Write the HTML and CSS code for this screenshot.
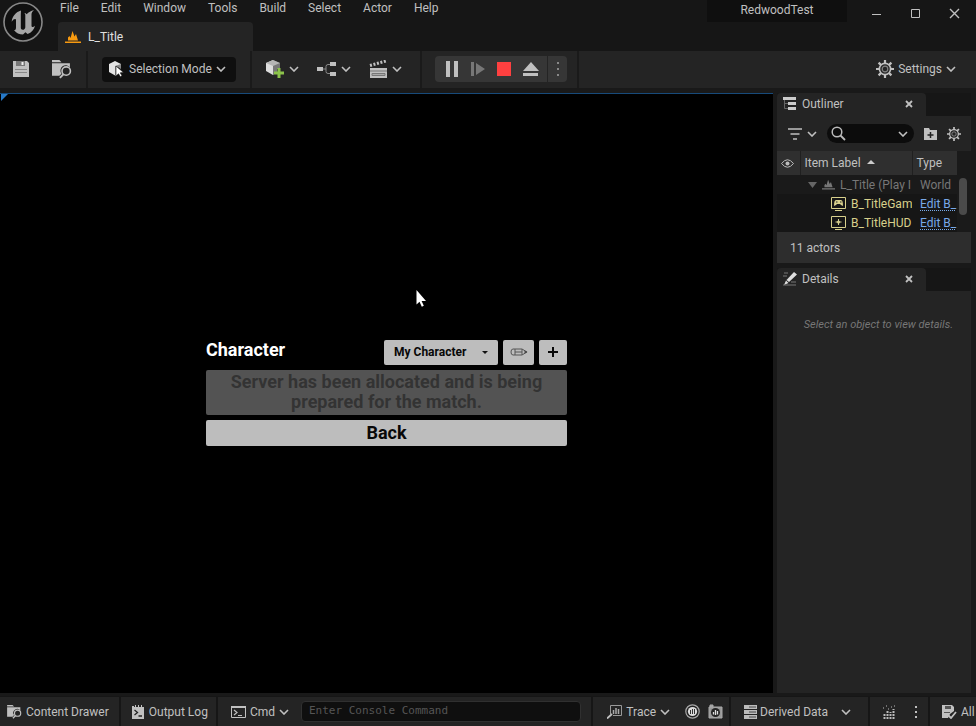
FILE: index.html
```html
<!DOCTYPE html>
<html lang="en">
<head>
<meta charset="utf-8">
<title>RedwoodTest</title>
<link rel="stylesheet" href="styles.css">
</head>
<body>
<svg class="defs" aria-hidden="true">
  <symbol id="chevron" viewBox="0 0 10 6"><path d="M1 1l4 4 4-4" fill="none" stroke="currentColor" stroke-width="1.6"/></symbol>
  <symbol id="gear" viewBox="0 0 18 18">
    <circle cx="9" cy="9" r="5.6" fill="none" stroke="currentColor" stroke-width="1.6"/>
    <circle cx="9" cy="9" r="2.8" fill="none" stroke="currentColor" stroke-width="1.2" opacity=".6"/>
    <path d="M9 0v3.5M9 14.500V18M0 9h3.500M14.500 9H18M2.600 2.600l2.500 2.500M12.900 12.900l2.500 2.500M2.600 15.400l2.500-2.500M12.900 5.100l2.500-2.500" stroke="currentColor" stroke-width="2.200"/>
  </symbol>
  <symbol id="browse" viewBox="0 0 19 18">
    <path d="M0 0h7l2 2H0zM0 3h17v4a5 5 0 0 0-8 6l-2 2H0z" fill="currentColor"/>
    <circle cx="13.500" cy="10.500" r="4" fill="#242424" stroke="currentColor" stroke-width="1.500"/>
    <path d="M10.800 13.500L7.500 17" stroke="currentColor" stroke-width="1.800"/>
  </symbol>
  <symbol id="cross" viewBox="0 0 8 8"><path d="M1 1l6 6M7 1L1 7" stroke="currentColor" stroke-width="1.800"/></symbol>
  <symbol id="peaks" viewBox="0 0 16 12"><path d="M3 9.500V6.500L4.500 5l1 2L7.500 0l2 5.500L11 3l2 6.500zM0 10.500h16V12H0z" fill="currentColor"/></symbol>
</svg>

<header class="titlebar">
  <svg class="logo" viewBox="0 0 42 42" aria-label="Unreal Engine" role="img">
    <circle cx="21" cy="21" r="19" fill="#101010" stroke="#888" stroke-width="1.600"/>
    <path d="M19 9.500c-5 1.400-9 6-9.300 11.200 1.200-2 2.500-2.700 3.300-2.700.7 0 1 .5 1 1.400v7c0 2.200-.8 2.600-2 2.600 2 3 5.500 4.600 9 4.600l2.400-2.400 2.200 1.800c4-1.500 6.500-4.300 7.400-8.300-1 1-2 1.500-2.700 1.400-.6-.1-.8-.6-.8-1.500V13.500c0-1.500.6-2.700 2.500-4.500-3 .8-5.500 2.200-7.300 4.200-.7-.7-1.500-1-2.400-1.100.8.700 1 1.200 1 2.100v12c0 1.500-1.200 2.600-2.500 2.600-1.200 0-2-.7-2-2V14c0-1 .1-2.500.2-4.500z" fill="#a5a5a5"/>
  </svg>
  <div class="title-main">
    <nav class="menu" aria-label="Main menu">
      <button>File</button><button>Edit</button><button>Window</button><button>Tools</button><button>Build</button><button>Select</button><button>Actor</button><button>Help</button>
    </nav>
    <div class="level-tab"><svg class="level-icon" width="16" height="12"><use href="#peaks"/></svg>L_Title</div>
  </div>
  <div class="project">RedwoodTest</div>
  <div class="window-buttons">
    <button aria-label="Minimize"><svg width="11" height="11"><path d="M1 6.500h9" stroke="currentColor"/></svg></button>
    <button aria-label="Maximize"><svg width="11" height="11"><path d="M1.500 1.500h8v8h-8z" fill="none" stroke="currentColor"/></svg></button>
    <button aria-label="Close"><svg width="11" height="11"><path d="M1 1l9 9M10 1l-9 9" stroke="currentColor" stroke-width="1.400"/></svg></button>
  </div>
</header>

<div class="toolbar">
  <div class="tools tools-file">
    <button aria-label="Save"><svg width="18" height="18" viewBox="0 0 18 18"><path d="M1 1h14l2 2v14H1z" fill="currentColor"/><path d="M4 1h9v5H4z" fill="#777"/><path d="M9.500 2h2v3h-2z" fill="#eee"/><path d="M3 9.500h12M3 12.500h12" stroke="#888"/></svg></button>
    <button aria-label="Browse"><svg width="20" height="19"><use href="#browse"/></svg></button>
  </div>
  <div class="tools tools-mode">
    <label class="mode">
      <svg width="15" height="16" viewBox="0 0 15 16"><path d="M0 3l6-3 6 3v3L7 5v10L0 11z" fill="#e4e4e4"/><path d="M6 5l6-2v5L7 5v10l-1-1z" fill="#888"/><path d="M7 5l7.500 6.500-3.300.3 1.800 3-1.700 1-1.800-3L7 15z" fill="#fff" stroke="#111" stroke-width=".6"/></svg>
      <select aria-label="Editor mode"><option>Selection Mode</option></select>
      <svg class="chev" width="10" height="6"><use href="#chevron"/></svg>
    </label>
  </div>
  <div class="tools tools-add">
    <button aria-label="Add content"><svg width="20" height="20" viewBox="0 0 20 20"><path d="M1 4l7-3v15l-7-4z" fill="#ddd"/><path d="M8 1l7 3v6H12v3H9v3H8z" fill="#777"/><path d="M1 4l7-3 7 3-7 3z" fill="#b5b5b5"/><path d="M14 9v10M9 14h10" stroke="#8bc24a" stroke-width="3"/></svg><svg width="10" height="6"><use href="#chevron"/></svg></button>
    <button aria-label="Blueprints"><svg width="20" height="16" viewBox="0 0 20 16"><path d="M0 6h6v4H0zM13 1h6v4h-6zM13 11h6v4h-6z" fill="currentColor"/><path d="M6 8h3M13 3.500h-2q-2 0-2 2v5q0 2 2 2h2" fill="none" stroke="#888"/></svg><svg width="10" height="6"><use href="#chevron"/></svg></button>
    <button aria-label="Cinematics"><svg width="19" height="19" viewBox="0 0 19 19"><path d="M1 8h17v10H1z" fill="currentColor"/><path d="M1 11h17M3 13.500h13v2H3z" stroke="#777" fill="#aaa"/><path d="M1 5.500L17 1" stroke="currentColor" stroke-width="3" stroke-dasharray="2 1.600"/></svg><svg width="10" height="6"><use href="#chevron"/></svg></button>
  </div>
  <div class="tools tools-play">
    <div class="play-group">
      <button aria-label="Pause"><svg width="12" height="16"><path d="M0 0h4v16H0zM8 0h4v16H8z" fill="currentColor"/></svg></button>
      <button aria-label="Advance frame"><svg width="15" height="16"><path d="M1 1h3v14H1zM6 2l9 6-9 6z" fill="#777"/></svg></button>
      <button aria-label="Stop"><svg width="14" height="16"><path d="M0 1h14v14H0z" fill="#ff4040"/></svg></button>
      <button aria-label="Eject"><svg width="16" height="16"><path d="M8 1l8 9H0zM0 12h15v3H0z" fill="currentColor"/></svg></button>
      <button class="more" aria-label="Play options"><svg width="4" height="16"><path d="M1 1h2v2H1zM1 7h2v2H1zM1 13h2v2H1z" fill="#888"/></svg></button>
    </div>
  </div>
  <button class="settings"><svg width="18" height="18"><use href="#gear"/></svg>Settings<svg width="10" height="6"><use href="#chevron"/></svg></button>
</div>

<main class="workspace">
  <section class="viewport" aria-label="Game viewport">
    <svg class="corner" width="8" height="7"><path d="M1 0h7L1 7z" fill="#2779c7"/></svg>
    <div class="lobby">
      <div class="lobby-top">
        <h1>Character</h1>
        <label class="character">
          <select aria-label="Character"><option>My Character</option></select>
          <svg class="chev" width="6" height="3"><path d="M0 0h6L3 3z" fill="#111"/></svg>
        </label>
        <button class="light edit" aria-label="Edit character"><svg width="18" height="8" viewBox="0 0 18 8"><path d="M3 1h9l5 3-5 3H3Q1 7 1 4t2-3zM5 1v6M5 4h7M12 1v6" fill="none" stroke="#555"/><path d="M14.500 2.500L17.500 4l-3 1.500z" fill="#444"/></svg></button>
        <button class="light add" aria-label="New character"><svg width="10" height="10"><path d="M5 0v10M0 5h10" stroke="#080808" stroke-width="2"/></svg></button>
      </div>
      <button class="light status-message" disabled>Server has been allocated and is being prepared for the match.</button>
      <button class="light back">Back</button>
    </div>
    <svg class="cursor" width="12" height="18"><path d="M.5 0v14.500l3-2.800 2.300 5 2-1-2.200-4.800H10z" fill="#fff"/></svg>
  </section>

  <aside class="side">
    <section class="panel outliner">
      <div class="tabs"><h2 class="tab"><svg width="14" height="14"><path d="M0 0h13v3H0zM5 5h8v3H5zM5 10h8v3H5z" fill="#ccc"/><path d="M1.500 3v8.500H5M1.500 6.500H5" fill="none" stroke="#666"/></svg>Outliner<button aria-label="Close Outliner"><svg width="8" height="8"><use href="#cross"/></svg></button></h2></div>
      <div class="filters">
        <button aria-label="Filter"><svg width="14" height="12"><path d="M0 1h14M2.500 6h9M5 11h4" stroke="currentColor" stroke-width="1.600"/></svg><svg width="10" height="6"><use href="#chevron"/></svg></button>
        <label class="search"><svg width="15" height="15"><circle cx="6" cy="6" r="4.800" fill="none" stroke="#bbb" stroke-width="1.500"/><path d="M9.500 9.500L14 14" stroke="#bbb" stroke-width="1.800"/></svg><input type="search" aria-label="Search outliner"><svg width="10" height="6"><use href="#chevron"/></svg></label>
        <button class="folder" aria-label="New folder"><svg width="13" height="13"><path d="M0 1h5l1 2h7v10H0z" fill="currentColor"/><path d="M6.500 5v6M3.500 8h6" stroke="#222" stroke-width="1.500"/></svg></button>
        <button aria-label="Outliner settings"><svg width="14" height="14"><use href="#gear"/></svg></button>
      </div>
      <div class="list">
        <table>
          <thead><tr>
            <th class="eye"><svg width="13" height="9" viewBox="0 0 13 9"><path d="M.5 4.500q6-7.500 12 0-6 7.500-12 0z" fill="none" stroke="#bbb"/><circle cx="6.500" cy="4.500" r="2" fill="#bbb"/></svg></th>
            <th class="label">Item Label<svg class="sort" width="8" height="4"><path d="M0 4l4-4 4 4z" fill="#ccc"/></svg></th>
            <th class="type">Type</th>
          </tr></thead>
          <tbody>
            <tr class="world"><td></td><td><div class="cell"><svg width="9" height="6"><path d="M0 0h9L4.500 6z" fill="#666"/></svg><svg width="13" height="11"><use href="#peaks"/></svg><span class="item">L_Title (Play I</span></div></td><td>World</td></tr>
            <tr class="actor"><td></td><td><div class="cell child"><svg width="15" height="14"><path d="M.5.500h14v11H.5zM4 13.500h7" fill="none" stroke="currentColor"/><path d="M3 9q0-6 2-6h5q2 0 2 6l-2-1-1-1H6L5 8z" fill="currentColor"/><path d="M5 5h1.500M9 5h1.500" stroke="#222"/></svg><span class="item">B_TitleGam</span></div></td><td><a href="#">Edit B_</a></td></tr>
            <tr class="actor"><td></td><td><div class="cell child"><svg width="15" height="14"><path d="M.5.500h14v11H.5zM4 13.500h7M7.500 3v6M4.500 6h6" fill="none" stroke="currentColor"/><circle cx="7.500" cy="6" r="1.500" fill="currentColor"/></svg><span class="item">B_TitleHUD</span></div></td><td><a href="#">Edit B_</a></td></tr>
          </tbody>
        </table>
        <div class="scroll"></div>
      </div>
      <div class="count">11 actors</div>
    </section>
    <section class="panel details">
      <div class="tabs"><h2 class="tab"><svg width="14" height="14"><path d="M11 0l3 2.500L6 10 3.500 8zM3 8.500L5.500 11 1 13z" fill="#ddd"/><path d="M0 4h4M1 1h4M0 13h13M8 10h5" stroke="#777"/></svg>Details<button aria-label="Close Details"><svg width="8" height="8"><use href="#cross"/></svg></button></h2></div>
      <p class="empty">Select an object to view details.</p>
    </section>
  </aside>
</main>

<footer class="statusbar">
  <div class="seg drawer"><button><svg width="15" height="14"><use href="#browse"/></svg>Content Drawer</button></div>
  <div class="seg log"><button><svg width="13" height="14"><path d="M0 1h2v1h1V0h1v2h2V0h1v2h2V0h1v2h2v12H0z" fill="currentColor"/><path d="M2.500 5l3 2.500-3 2.500M6.500 11H10" fill="none" stroke="#222" stroke-width="1.300"/></svg>Output Log</button></div>
  <div class="seg console">
    <button><svg width="15" height="12"><path d="M.5.500h14v11H.5z" fill="none" stroke="currentColor"/><path d="M0 0h15v2H0z" fill="currentColor"/><path d="M3 4l3 2.500L3 9M7 9.500h4" fill="none" stroke="currentColor" stroke-width="1.200"/></svg>Cmd<svg width="10" height="6"><use href="#chevron"/></svg></button>
    <input type="text" aria-label="Console command" placeholder="Enter Console Command">
  </div>
  <div class="seg trace">
    <button><svg width="15" height="14"><path d="M3.500 9V.5h11v10H6" fill="none" stroke="#999"/><path d="M6.500 9V5M9 9V3M11.500 9V4" stroke="#aaa" stroke-width="1.500"/><path d="M0 13.500L5 9" stroke="currentColor" stroke-width="1.800"/></svg>Trace<svg width="10" height="6"><use href="#chevron"/></svg></button>
    <button aria-label="Start trace"><svg width="15" height="15"><circle cx="7.500" cy="7.500" r="6.700" fill="none" stroke="#aaa" stroke-width="1.200"/><circle cx="7.500" cy="7.500" r="4.600" fill="#ddd"/><path d="M5.500 6v4M7.500 5v5M9.500 5v5" stroke="#333"/></svg></button>
    <button aria-label="Trace snapshot"><svg width="15" height="15"><path d="M1 3h13v11H1zM2 1h3v2H2z" fill="#999" stroke="#aaa"/><circle cx="7.500" cy="8.500" r="4.500" fill="#242424"/><path d="M5.500 10.500V8M7.500 11V6M9.500 10.500V7" stroke="#ddd" stroke-width="1.300"/></svg></button>
  </div>
  <div class="seg derived"><button><svg width="13" height="14"><path d="M0 0h13v4H0zM0 5h13v4H0zM0 10h13v4H0z" fill="#bbb"/><path d="M5 2h7M5 7h7M5 12h7" stroke="#444"/></svg>Derived Data<svg class="space" width="10" height="6"><use href="#chevron"/></svg></button></div>
  <div class="seg stats">
    <button aria-label="Performance"><svg width="13" height="14"><path d="M1.500 14V8M4.500 14V6M7.500 14V7M10.500 14V4" stroke="#bbb" stroke-width="2" stroke-dasharray="2 1"/><path d="M0 3h1M3 1h1M5 4h1M8 2h1M11 1h1" stroke="#bbb"/></svg></button>
    <button aria-label="More"><svg width="4" height="14"><path d="M1 1h2v2H1zM1 6h2v2H1zM1 11h2v2H1z" fill="currentColor"/></svg></button>
  </div>
  <div class="seg saved"><button><svg width="15" height="14"><path d="M0 0h10l2 2v4L8 9l-2 4H0z" fill="currentColor"/><path d="M3 1h6v3H3zM2 7h6v1H2z" fill="#555"/><path d="M6.500 10.500L9 13l5-6" fill="none" stroke="currentColor" stroke-width="1.800"/></svg>All</button></div>
</footer>
</body>
</html>
```
FILE: styles.css
```css
* { box-sizing: border-box; }

body {
  margin: 0;
  height: 100vh;
  display: flex;
  flex-direction: column;
  overflow: hidden;
  background: #161616;
  color: #c0c0c0;
  font: 12px/16px Roboto, "Liberation Sans", sans-serif;
  white-space: nowrap;
}

svg { flex: none; display: block; }
.defs { position: absolute; width: 0; height: 0; }

button, select, input { font: inherit; color: inherit; }
button {
  display: flex;
  align-items: center;
  justify-content: center;
  padding: 0;
  border: 0;
  background: none;
}
select {
  appearance: none;
  padding: 0;
  border: 0;
  background: none;
}

/* Title bar */
.titlebar { display: flex; height: 51px; flex: none; }
.logo { width: 42px; height: 42px; margin: 1px 14px 0 2px; }
.title-main { flex: 1; display: flex; flex-direction: column; justify-content: space-between; }
.menu { display: flex; gap: 22px; padding-left: 2px; }
.level-tab {
  display: flex;
  align-items: center;
  gap: 7px;
  width: 195px;
  height: 29px;
  padding-left: 7px;
  border-radius: 4px 4px 0 0;
  background: #242424;
  color: #e0e0e0;
}
.level-icon { color: #f79a10; }
.project {
  width: 140px;
  height: 22px;
  padding-top: 2px;
  background: #0f0f0f;
  text-align: center;
}
.window-buttons { display: flex; gap: 28px; height: 26px; padding: 0 16px 0 24px; }

/* Toolbar */
.toolbar {
  display: flex;
  flex: none;
  height: 37px;
  background: #242424;
}
.tools {
  display: flex;
  align-items: center;
  padding-bottom: 1px;
  border-right: 2px solid #1a1a1a;
}
.tools-file { gap: 22px; padding-left: 12px; padding-right: 14px; }
.tools-mode { padding-left: 14px; padding-right: 14px; }
.mode {
  display: grid;
  grid-template-columns: 15px 97px;
  gap: 5px;
  align-items: center;
  height: 25px;
  padding: 0 10px 0 7px;
  border-radius: 4px;
  background: #0f0f0f;
}
.mode select, .mode .chev { grid-area: 1 / 2; }
.chev { justify-self: end; pointer-events: none; }
.tools-add { gap: 18px; padding-left: 13px; padding-right: 18px; }
.tools-add button { gap: 4px; }
.tools-play { padding-left: 13px; padding-right: 10px; }
.play-group {
  display: flex;
  align-items: center;
  gap: 12px;
  height: 26px;
  padding-left: 11px;
  border-radius: 4px;
  background: #363636;
}
.more { width: 20px; height: 26px; margin-left: -4px; border-left: 1px solid #242424; }
.settings { gap: 4px; margin-left: auto; padding: 0 20px 1px 0; }

/* Workspace */
.workspace {
  display: flex;
  flex: 1;
  min-height: 0;
  gap: 4px;
  padding: 5px 5px 3px 0;
  background: #191919;
}
.viewport {
  position: relative;
  display: flex;
  flex: 1;
  align-items: center;
  justify-content: center;
  padding-bottom: 2px;
  border-top: 1px solid #174a7a;
  background: #000;
}
.corner { position: absolute; top: 0; left: 0; }
.cursor { position: absolute; top: 196px; left: 416px; }
.lobby {
  display: flex;
  flex-direction: column;
  gap: 5px;
  width: 361px;
}
.lobby-top { display: flex; gap: 5px; height: 25px; }
h1 { margin: 0 auto 0 0; color: #fff; font-size: 18px; line-height: 20px; }
.light, .character { border-radius: 2px; background: #bdbdbd; color: #080808; font-weight: 700; }
.character {
  display: grid;
  align-items: center;
  width: 114px;
  padding: 0 10px;
}
.character select, .character .chev { grid-area: 1 / 1; }
.edit { width: 31px; }
.add { width: 28px; }
.status-message {
  height: 45px;
  padding: 0 16px;
  background: #535353;
  color: #333;
  font-size: 18px;
  line-height: 20px;
  white-space: normal;
}
.back { height: 26px; font-size: 18px; }

/* Side panels */
.side { display: flex; flex-direction: column; gap: 5px; width: 194px; }
.panel { background: #242424; }
.tabs { height: 23px; background: #161616; }
.tab {
  display: flex;
  align-items: center;
  gap: 5px;
  width: 149px;
  height: 23px;
  margin: 0;
  padding: 0 13px 1px 6px;
  border-radius: 4px 4px 0 0;
  background: #242424;
  font-size: 12px;
  font-weight: 400;
}
.tab button { margin-left: auto; }
.filters {
  display: flex;
  align-items: center;
  gap: 10px;
  height: 35px;
  padding: 0 10px 0 11px;
}
.filters button { gap: 5px; }
.search {
  display: flex;
  flex: 1;
  align-items: center;
  min-width: 0;
  height: 19px;
  padding: 0 6px 0 4px;
  border-radius: 10px;
  background: #0c0c0c;
}
.search input {
  flex: 1;
  width: 0;
  min-width: 0;
  padding: 0;
  border: 0;
  outline: 0;
  background: none;
}
.list { display: flex; background: #1a1a1a; }
table { width: 180px; table-layout: fixed; border-collapse: collapse; }
th { height: 24px; padding: 0 0 0 4px; background: #2f2f2f; font-weight: 400; text-align: left; }
th + th { border-left: 1px solid #202020; }
.eye { width: 23px; }
.type { width: 45px; }
.sort { display: inline-block; margin: 0 0 3px 6px; }
td { height: 19px; padding: 0; }
td:last-child { padding-left: 8px; }
.world { color: #777; }
.world svg:first-child { margin-left: 8px; }
.cell { display: flex; align-items: center; gap: 5px; overflow: hidden; }
.child { padding-left: 31px; }
.item { flex: 1; overflow: hidden; }
.actor { background: #161616; color: #d8d08c; }
a { color: #79a9e8; text-decoration: underline dotted; text-underline-offset: 2px; }
.scroll { width: 8px; height: 37px; margin: 27px 0 0 2px; border-radius: 4px; background: #4a4a4a; }
.count { height: 31px; padding: 0 13px; background: #2d2d2d; line-height: 32px; }
.details { flex: 1; }
.empty {
  margin: 0;
  padding: 26px 18px 0;
  color: #777;
  font-size: 11px;
  font-style: italic;
  text-align: right;
}

/* Status bar */
.statusbar {
  display: flex;
  flex: none;
  gap: 2px;
  height: 30px;
  padding-top: 1px;
  overflow: hidden;
}
.seg { display: flex; align-items: center; background: #242424; }
.seg button { gap: 4px; }
.drawer { padding: 0 10px 0 7px; }
.log { padding: 0 8px 0 11px; }
.console { flex: 1; gap: 12px; padding: 0 10px 0 13px; }
.console input {
  flex: 1;
  min-width: 0;
  height: 21px;
  padding: 0 7px 2px;
  border: 1px solid #303030;
  border-radius: 4px;
  background: #0f0f0f;
  font: 11px "DejaVu Sans Mono", "Liberation Mono", monospace;
}
.console input::placeholder { color: #555; }
.trace { gap: 8px; padding: 0 6px 0 14px; }
.trace button:first-child { margin-right: 7px; }
.derived { padding: 0 17px 0 13px; }
.derived button { gap: 3px; }
.derived .space { margin-left: 10px; }
.stats { gap: 18px; padding: 0 10px 0 13px; }
.saved { width: 46px; padding-left: 12px; }
```
